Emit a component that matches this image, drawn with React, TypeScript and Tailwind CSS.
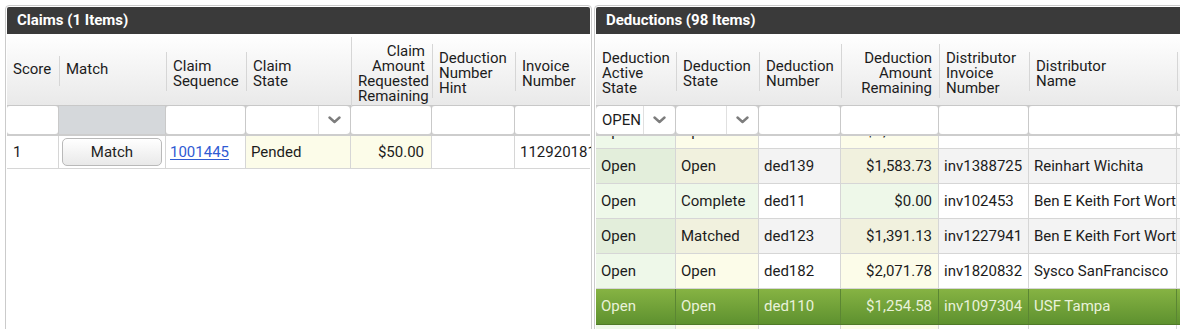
import * as React from 'react';

type Col = {
  w: string;
  label: string[];
  right?: boolean;
  first?: boolean;
  filter: 'text' | 'disabled' | 'select';
  filterValue?: string;
};

const claimCols: Col[] = [
  { w: 'w-[52px]', label: ['Score'], first: true, filter: 'text' },
  { w: 'w-[107px]', label: ['Match'], filter: 'disabled' },
  { w: 'w-[80px]', label: ['Claim', 'Sequence'], filter: 'text' },
  { w: 'w-[105px]', label: ['Claim', 'State'], filter: 'select' },
  { w: 'w-[81px]', label: ['Claim', 'Amount', 'Requested', 'Remaining'], right: true, filter: 'text' },
  { w: 'w-[83px]', label: ['Deduction', 'Number', 'Hint'], filter: 'text' },
  { w: 'w-[120px]', label: ['Invoice', 'Number'], filter: 'text' },
];

const deductionCols: Col[] = [
  { w: 'w-[80px]', label: ['Deduction', 'Active', 'State'], first: true, filter: 'select', filterValue: 'OPEN' },
  { w: 'w-[83px]', label: ['Deduction', 'State'], filter: 'select' },
  { w: 'w-[82px]', label: ['Deduction', 'Number'], filter: 'text' },
  { w: 'w-[98px]', label: ['Deduction', 'Amount', 'Remaining'], right: true, filter: 'text' },
  { w: 'w-[90px]', label: ['Distributor', 'Invoice', 'Number'], filter: 'text' },
  { w: 'w-[148px]', label: ['Distributor', 'Name'], filter: 'text' },
  { w: 'w-[120px]', label: ['Customer', 'Name'], filter: 'text' },
];

type Deduction = {
  active: string;
  state: string;
  number: string;
  amount: string;
  invoice: string;
  name: string;
  selected?: boolean;
};

const deductions: Deduction[] = [
  { active: 'Open', state: 'Open', number: 'ded104', amount: '$1,120.40', invoice: 'inv1004421', name: 'Ben E Keith Dallas' },
  { active: 'Open', state: 'Open', number: 'ded139', amount: '$1,583.73', invoice: 'inv1388725', name: 'Reinhart Wichita' },
  { active: 'Open', state: 'Complete', number: 'ded11', amount: '$0.00', invoice: 'inv102453', name: 'Ben E Keith Fort Worth' },
  { active: 'Open', state: 'Matched', number: 'ded123', amount: '$1,391.13', invoice: 'inv1227941', name: 'Ben E Keith Fort Worth' },
  { active: 'Open', state: 'Open', number: 'ded182', amount: '$2,071.78', invoice: 'inv1820832', name: 'Sysco SanFrancisco' },
  { active: 'Open', state: 'Open', number: 'ded110', amount: '$1,254.58', invoice: 'inv1097304', name: 'USF Tampa', selected: true },
  { active: 'Open', state: 'Open', number: 'ded167', amount: '$980.12', invoice: 'inv1671130', name: 'Sysco Houston' },
];

export default function App() {
  return (
    <div className="w-[1180px] h-[329px] overflow-hidden bg-white flex items-start pt-[5px] pl-[5px] font-['Roboto',sans-serif] text-[15px] text-[#1c1c1c]">
      <ClaimsPanel />
      <DeductionsPanel />
    </div>
  );
}

function Panel({ title, className, children }: { title: string; className: string; children: React.ReactNode }) {
  return (
    <section className={`${className} h-[340px] shrink-0 flex flex-col border border-[#cbcbcb] rounded-t-[4px] p-px overflow-hidden`}>
      <div className="h-[27px] shrink-0 bg-[#3a3a3a] text-white font-bold text-[15px] flex items-center pl-[10px] rounded-t-[2px]">
        {title}
      </div>
      {children}
    </section>
  );
}

function Chevron() {
  return (
    <svg width="13" height="8" viewBox="0 0 13 8" fill="none">
      <polyline points="1.5,1.5 6.5,6 11.5,1.5" stroke="#7d7d7d" strokeWidth="2.4" strokeLinecap="round" strokeLinejoin="round" />
    </svg>
  );
}

function HeaderRow({ cols }: { cols: Col[] }) {
  return (
    <div className="h-[72px] shrink-0 flex border-b border-[#c8c8c8] bg-linear-to-b from-[#ffffff] to-[#e9e9e9]">
      {cols.map((c) => (
        <div key={c.label.join(' ')} className={`${c.w} shrink-0 h-full flex items-center pt-[3px]`}>
          <div
            className={`w-full min-h-[30px] leading-[15px] overflow-hidden flex flex-col justify-center pl-[6px] ${
              c.label.length === 1 ? 'pt-[2px] pb-[6px]' : 'pt-[7px] pb-[2px]'
            } ${c.first ? '' : 'border-l border-[#d6d6d6]'} ${c.right ? 'text-right pr-[7px]' : 'pr-[4px]'}`}
          >
            {c.label.map((l) => (
              <div key={l} className="whitespace-nowrap">
                {l}
              </div>
            ))}
          </div>
        </div>
      ))}
    </div>
  );
}

function FilterRow({ cols }: { cols: Col[] }) {
  return (
    <div className="h-[30px] shrink-0 flex border-b-2 border-[#cdcdcd] bg-[#d2d2d2]">
      {cols.map((c) => (
        <div key={c.label.join(' ')} className={`${c.w} shrink-0 h-full border-r border-[#c9c9c9]`}>
          {c.filter === 'disabled' && <div className="h-full bg-[#d5d8db]" />}
          {c.filter === 'text' && <div className="h-full bg-white rounded-[3px]" />}
          {c.filter === 'select' && (
            <div className="h-full bg-white rounded-[4px] flex">
              <div className="flex-1 flex items-center pl-[6px] pt-px">{c.filterValue}</div>
              <div className="w-[32px] border-l border-[#e0e0e0] flex items-center justify-center">
                <Chevron />
              </div>
            </div>
          )}
        </div>
      ))}
    </div>
  );
}

function ClaimsPanel() {
  return (
    <Panel title="Claims (1 Items)" className="w-[587px]">
      <HeaderRow cols={claimCols} />
      <FilterRow cols={claimCols} />
      <div className="h-[33px] shrink-0 flex border-b border-[#d6d6d6]">
        <div className="w-[52px] shrink-0 flex items-center pl-[6px] border-r border-[#d6d6d6]">1</div>
        <div className="w-[107px] shrink-0 flex items-center justify-center border-r border-[#d6d6d6]">
          <button className="w-[100px] h-[28px] rounded-[5px] border border-[#b9b9b9] bg-linear-to-b from-[#ffffff] to-[#e9e9e9] text-[15px] text-[#222]">
            Match
          </button>
        </div>
        <div className="w-[80px] shrink-0 flex items-center pl-[4px] border-r border-[#d6d6d6]">
          <a className="text-[#2f5bd3] underline underline-offset-2">1001445</a>
        </div>
        <div className="w-[105px] shrink-0 flex items-center pl-[5px] border-r border-[#d6d6d6] bg-[#fcfce9]">Pended</div>
        <div className="w-[81px] shrink-0 flex items-center justify-end pr-[7px] border-r border-[#d6d6d6] bg-[#fcfce9]">$50.00</div>
        <div className="w-[83px] shrink-0 border-r border-[#d6d6d6]" />
        <div className="w-[120px] shrink-0 flex items-center pl-[5px] whitespace-nowrap">11292018174</div>
      </div>
    </Panel>
  );
}

function DeductionsPanel() {
  return (
    <Panel title="Deductions (98 Items)" className="w-[700px] ml-[2px]">
      <HeaderRow cols={deductionCols} />
      <FilterRow cols={deductionCols} />
      <div className="flex-1 overflow-hidden">
        <div className="-mt-[22px]">
          {deductions.map((d, i) => (
            <DeductionRow key={d.number} d={d} dark={i % 2 === 1} />
          ))}
        </div>
      </div>
    </Panel>
  );
}

function DeductionRow({ d, dark }: { d: Deduction; dark: boolean }) {
  if (d.selected) {
    return (
      <div className="h-[36px] flex border-b border-[#4f7a28] bg-linear-to-b from-[#86b343] to-[#5e912f] text-[#e9f2da]">
        <Cell w="w-[80px]" sel>{d.active}</Cell>
        <Cell w="w-[83px]" sel>{d.state}</Cell>
        <Cell w="w-[82px]" sel>{d.number}</Cell>
        <Cell w="w-[98px]" sel right>{d.amount}</Cell>
        <Cell w="w-[90px]" sel>{d.invoice}</Cell>
        <Cell w="w-[148px]" sel>{d.name}</Cell>
        <Cell w="w-[120px]" sel>{''}</Cell>
      </div>
    );
  }

  const green = dark ? 'bg-[#e3eedb]' : 'bg-[#eef8e9]';
  const yellow = dark ? 'bg-[#f1f1de]' : 'bg-[#fcfce9]';
  const plain = dark ? 'bg-[#f3f3f3]' : 'bg-white';

  return (
    <div className="h-[35px] flex border-b border-[#d6d6d6]">
      <Cell w="w-[80px]" bg={green}>{d.active}</Cell>
      <Cell w="w-[83px]" bg={d.state === 'Complete' ? green : yellow}>{d.state}</Cell>
      <Cell w="w-[82px]" bg={plain}>{d.number}</Cell>
      <Cell w="w-[98px]" bg={d.amount === '$0.00' ? green : yellow} right>{d.amount}</Cell>
      <Cell w="w-[90px]" bg={plain}>{d.invoice}</Cell>
      <Cell w="w-[148px]" bg={plain}>{d.name}</Cell>
      <Cell w="w-[120px]" bg={plain}>{''}</Cell>
    </div>
  );
}

function Cell({
  w,
  bg = '',
  right,
  sel,
  children,
}: {
  w: string;
  bg?: string;
  right?: boolean;
  sel?: boolean;
  children: React.ReactNode;
}) {
  return (
    <div
      className={`${w} ${bg} shrink-0 h-full flex items-center overflow-hidden whitespace-nowrap border-r ${
        sel ? 'border-[#5b8633]' : 'border-[#d6d6d6]'
      } ${right ? 'justify-end pr-[6px]' : 'pl-[5px]'}`}
    >
      {children}
    </div>
  );
}
